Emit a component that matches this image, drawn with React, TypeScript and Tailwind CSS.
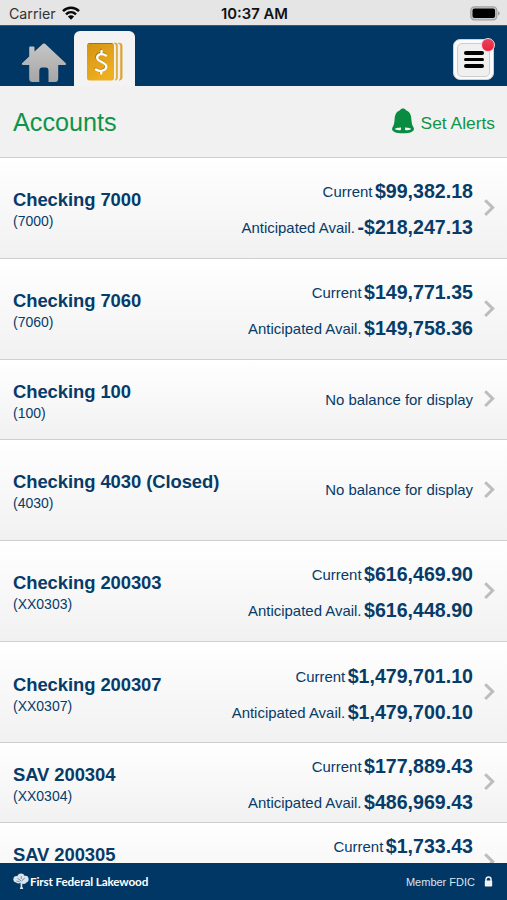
type Account = {
  name: string;
  mask?: string;
  current?: string;
  available?: string;
  compact?: boolean;
};

const accounts: Account[] = [
  { name: "Checking 7000", mask: "(7000)", current: "$99,382.18", available: "-$218,247.13" },
  { name: "Checking 7060", mask: "(7060)", current: "$149,771.35", available: "$149,758.36" },
  { name: "Checking 100", mask: "(100)", compact: true },
  { name: "Checking 4030 (Closed)", mask: "(4030)" },
  { name: "Checking 200303", mask: "(XX0303)", current: "$616,469.90", available: "$616,448.90" },
  { name: "Checking 200307", mask: "(XX0307)", current: "$1,479,701.10", available: "$1,479,700.10" },
  { name: "SAV 200304", mask: "(XX0304)", current: "$177,889.43", available: "$486,969.43", compact: true },
  { name: "SAV 200305", current: "$1,733.43", compact: true },
];

function StatusBar() {
  return (
    <div className="grid h-[25px] shrink-0 grid-cols-3 items-center bg-[#e5e5e5] pt-[2px] pl-[9px] pr-[7px] font-['Inter',sans-serif] leading-none">
      <div className="flex items-center gap-[6px] text-[#333]">
        <span className="pt-[2px] text-[14.2px]">Carrier</span>
        <svg width="18" height="14" viewBox="0 0 18 14" fill="none" stroke="#080808" strokeWidth="2.5">
          <path d="M1 5.2C5.6 0.7 12.4 0.7 17 5.2" />
          <path d="M4 8.3C6.9 5.5 11.1 5.5 14 8.3" />
          <path d="M9 13.7L5.9 10.5C7.6 8.9 10.4 8.9 12.1 10.5Z" fill="#080808" stroke="none" />
        </svg>
      </div>
      <span className="justify-self-center whitespace-nowrap pt-[2px] text-[14.8px] font-semibold text-[#111]">10:37 AM</span>
      <svg className="justify-self-end" width="30" height="15" viewBox="0 0 30 15">
        <rect x="0.8" y="0.8" width="26" height="13" rx="3.6" fill="#c9c9c9" stroke="#a1a1a1" strokeWidth="1.2" />
        <rect x="2.5" y="2.5" width="22.6" height="9.6" rx="2" fill="#000" />
        <path d="M28 5.2C30.2 6 30.2 8.6 28 9.4Z" fill="#9a9a9a" />
      </svg>
    </div>
  );
}

function HomeIcon() {
  return (
    <svg width="46" height="40" viewBox="0 0 46 40">
      <defs>
        <linearGradient id="home" x1="0" y1="0" x2="0" y2="1">
          <stop offset="0" stopColor="#c6c6c6" />
          <stop offset="1" stopColor="#a6a6a6" />
        </linearGradient>
      </defs>
      <path
        d="M23 0.6Q22 0.6 20.6 2L13.5 8.6V4.6Q13.5 3.4 12.4 3.4H9.3Q8.2 3.4 8.2 4.6V13.5L1 20.2Q0.2 22 2 22H8.2V35.5Q8.2 39 11.5 39H18.3V28Q18.3 24.6 21.3 24.6H24.7Q27.5 24.6 27.5 28V39H34Q37.2 39 37.2 35.5V22H44Q45.8 22 44.8 20.2L25.4 2Q24 0.6 23 0.6Z"
        fill="url(#home)"
      />
    </svg>
  );
}

function AccountsIcon() {
  return (
    <svg width="38" height="41" viewBox="0 0 38 41">
      <defs>
        <linearGradient id="gold" x1="0" y1="0" x2="0.5" y2="1">
          <stop offset="0" stopColor="#d49312" />
          <stop offset="1" stopColor="#eeaf20" />
        </linearGradient>
      </defs>
      <rect x="1" y="2" width="27" height="37.5" rx="2.5" fill="url(#gold)" />
      <path d="M2.5 2.5H26.5" stroke="#8d7538" strokeWidth="1" />
      <path d="M28 2H29.8Q31.6 2.2 31.6 4V37Q31.6 38.8 29 39.4Q30.2 38 30.2 36V5Q30.2 3 28 2Z" fill="#dba32b" stroke="#dba32b" strokeWidth="0.4" />
      <path d="M32 2H33.8Q36.2 2.2 36.2 4.5V36.5Q36.2 39 33 39.4Q34.4 38 34.4 36V5Q34.4 3 32 2Z" fill="#dba32b" stroke="#dba32b" strokeWidth="0.4" />
      {/* dollar sign with its dark top-left edge */}
      <g fill="none" strokeLinecap="round">
        <path d="M19.4 13.6C16.6 11.3 10.6 11.6 10.3 15.8C10.1 20.2 19.9 19.9 19.6 25C19.3 29.6 12.4 30.2 9.3 27.6M15 8.9V12M14.6 29V31.6" stroke="#7f611b" strokeWidth="2.2" opacity="0.75" />
        <path d="M20 14.6C17.2 12.3 11.4 12.6 11.1 16.6C10.9 20.8 20.6 20.7 20.3 25.8C20 30 13 30.8 9.8 28.4M15.5 9.9V12.6M15.2 29.8V32.4" stroke="#fff" strokeWidth="2.3" />
      </g>
    </svg>
  );
}

function NavBar() {
  return (
    <nav className="flex h-[61px] shrink-0 items-end border-t border-[#315a7b] bg-[#003764] pl-[21px] pr-[13px]">
      <div className="mb-[3px] w-[53px]"><HomeIcon /></div>
      <div className="flex h-[55px] w-[61px] items-start rounded-t-[6px] bg-[#f3f3f3] pl-[12px] pt-[10px]">
        <AccountsIcon />
      </div>
      <button className="relative mb-[6px] ml-auto flex h-[41px] w-[41px] items-center justify-center rounded-[7px] border border-[#c9cfd5] bg-[#fafafa]">
        <span className="flex h-[34px] w-[33px] flex-col items-center justify-center gap-[3px] rounded-[5px] border border-[#cecece] bg-[#f0f0f0]">
          <span className="h-[3.5px] w-[20px] rounded-full bg-black" />
          <span className="h-[3.5px] w-[20px] rounded-full bg-black" />
          <span className="h-[3.5px] w-[20px] rounded-full bg-black" />
        </span>
        <span className="absolute -right-[2px] -top-[2px] h-[14px] w-[14px] rounded-full border border-[#f4d4d9] bg-linear-to-b from-[#e8415a] to-[#ee1c38]" />
      </button>
    </nav>
  );
}

function BellIcon() {
  return (
    <svg width="24" height="26" viewBox="0 0 24 26">
      <path
        d="M12 0.5C13.5 0.5 14.4 1.2 15 2.2C19.2 3.6 20.2 7.4 20.4 11.5C20.6 15.3 21.3 17.4 22.6 19.6C24.2 23 20 25.3 12 25.3S-0.2 23 1.4 19.6C2.7 17.4 3.4 15.3 3.6 11.5C3.8 7.4 4.8 3.6 9 2.2C9.6 1.2 10.5 0.5 12 0.5Z"
        fill="#078c42"
      />
      <path d="M4 20.8C5.4 18.9 18.6 18.9 20 20.8C19.9 22 17 22.3 14.9 22.3C14.2 20.8 9.8 20.8 9.1 22.3C7 22.3 4.1 22 4 20.8Z" fill="#f1f1f1" />
      <path d="M10 18.5H14V21.8Q12 22.8 10 21.8Z" fill="#078c42" />
    </svg>
  );
}

function Balance({ label, amount }: { label: string; amount: string }) {
  return (
    <div className="flex h-[36px] justify-end gap-[2.5px] whitespace-nowrap leading-[36px]">
      <span className="pt-px text-[14.95px]">{label}</span>
      <span className="text-[19.6px] font-bold">{amount}</span>
    </div>
  );
}

function AccountRow({ account }: { account: Account }) {
  return (
    <li
      className={`flex shrink-0 items-center border-b border-[#cfcfcf] bg-linear-to-b from-white to-[#f1f1f1] pl-[13px] pr-[12px] text-[#073b68] ${account.compact ? "h-[79.6px]" : "h-[101.2px]"}`}
    >
      <div className="whitespace-nowrap pt-[5px]">
        <div className="text-[18.45px] font-bold leading-[22px] tracking-[-0.08px]">{account.name}</div>
        <div className="h-[20px] text-[14px] leading-[20px]">{account.mask}</div>
      </div>
      <div className="ml-auto">
        {account.current ? (
          <div className="h-[75px] pt-[3px]">
            <Balance label="Current" amount={account.current} />
            {account.available && <Balance label="Anticipated Avail." amount={account.available} />}
          </div>
        ) : (
          <div className="pt-[2px] text-[14.95px]">No balance for display</div>
        )}
      </div>
      <svg className="ml-[10px]" width="12" height="18" viewBox="0 0 12 18" fill="none" stroke="#bdbdbd" strokeWidth="3">
        <path d="M2.2 1.2L9.7 8.6L2.2 16" />
      </svg>
    </li>
  );
}

function Footer() {
  return (
    <footer className="flex h-[37px] shrink-0 items-center bg-[#003764] pl-[13px] pr-[14px] text-white">
      <svg width="16" height="17" viewBox="0 0 16 17">
        <g fill="#dce5eb">
          <circle cx="8" cy="4" r="3.6" />
          <circle cx="3.7" cy="6.2" r="3.3" />
          <circle cx="12.2" cy="6.2" r="3.4" />
          <circle cx="5.4" cy="8.2" r="2.4" />
          <circle cx="10.7" cy="8.4" r="2.5" />
          <path d="M7.2 7H9.4L9.2 13.6L10.3 16H6.8L7.7 13.6Z" />
        </g>
        <path d="M8 7.8L4.5 5.2M8.5 8L11.8 5M8.3 6V3.2M3.5 8L6.5 8.7" stroke="#406889" strokeWidth="0.7" />
      </svg>
      <span className="ml-px whitespace-nowrap pt-px font-['Lato',sans-serif] text-[11.7px] font-bold tracking-[-0.12px]">First Federal Lakewood</span>
      <span className="ml-auto whitespace-nowrap pt-px text-[11px] text-[#dce5ed]">Member FDIC</span>
      <svg className="ml-[9px]" width="9" height="11" viewBox="0 0 9 11">
        <path d="M2 5V3.4a2.5 2.5 0 0 1 5 0V5" fill="none" stroke="#f1f1f1" strokeWidth="1.5" />
        <rect x="0.8" y="4.6" width="7.4" height="5.9" rx="0.8" fill="#f1f1f1" />
      </svg>
    </footer>
  );
}

export default function App() {
  return (
    <div className="flex h-[900px] w-[507px] flex-col overflow-hidden bg-white font-['Liberation_Sans',Arial,sans-serif]">
      <StatusBar />
      <NavBar />
      <header className="flex h-[71.6px] shrink-0 items-center border-b border-[#cfcfcf] bg-[#f1f1f1] pl-[13px] pr-[12px] text-[#109448]">
        <h1 className="pt-[4px] text-[25.2px]">Accounts</h1>
        <div className="ml-auto flex items-center gap-[6px]">
          <BellIcon />
          <span className="whitespace-nowrap pt-[3px] text-[17.4px]">Set Alerts</span>
        </div>
      </header>
      <ul className="flex min-h-0 flex-1 flex-col overflow-hidden">
        {accounts.map((account) => (
          <AccountRow key={account.name} account={account} />
        ))}
      </ul>
      <Footer />
    </div>
  );
}
